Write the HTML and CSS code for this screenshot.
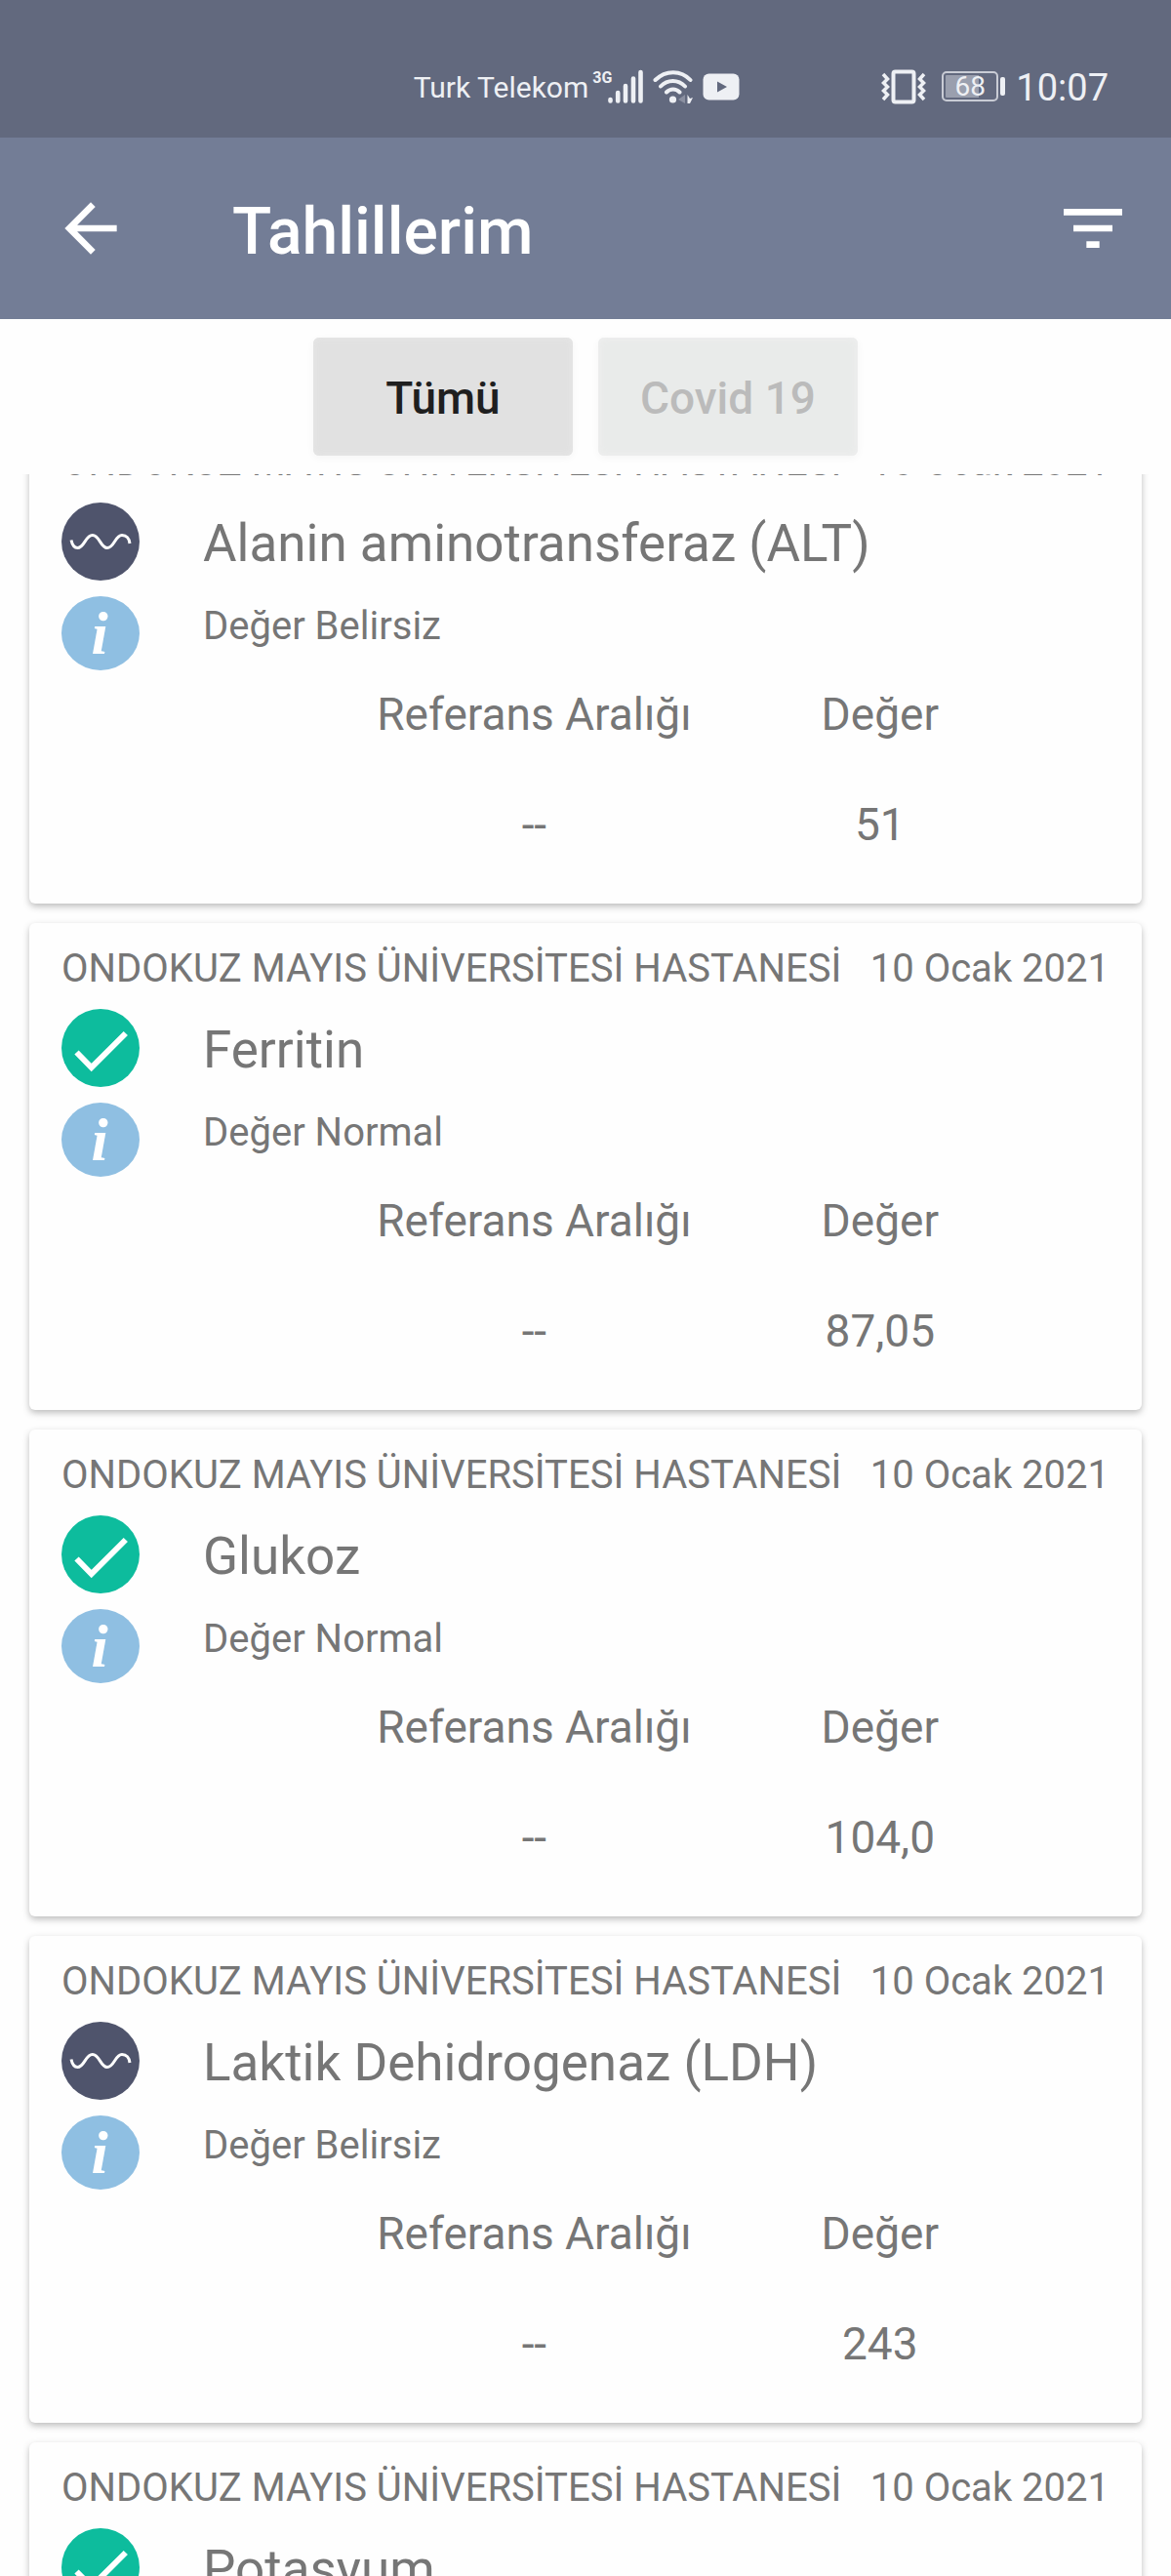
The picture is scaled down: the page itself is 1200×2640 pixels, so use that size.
FILE: index.html
```html
<!DOCTYPE html>
<html lang="tr">
<head>
    <meta charset="UTF-8">
    <meta name="viewport" content="width=device-width, initial-scale=1.0">
    <title>Tahlillerim</title>
    <link rel="stylesheet" href="styles.css">
</head>
<body>

    <div class="status-bar">
        <div class="status-group">
            <span class="carrier">Turk Telekom</span>
            <span class="network">3G</span>
            <svg class="signal" width="36" height="36" viewBox="0 0 36 36" fill="none" stroke="#eef0f4" stroke-width="4.600" stroke-linecap="round">
                <path d="M2.500 31V32.500M10.200 24V32.500M18 17V32.500M26 9.500V32.500M33.500 3V32.500"/>
            </svg>
            <svg class="wifi" width="42" height="36" viewBox="0 0 42 36" fill="none" stroke="#eef0f4" stroke-width="4" stroke-linecap="round">
                <path d="M2.500 11C13 0.500 29 0.500 38.500 11M8 17.500C15 10 26 10 33 17.500M14 23.500C18 19.500 23.500 19.500 27.500 23.500"/>
                <circle cx="20.500" cy="31" r="3.600" fill="#eef0f4" stroke="none"/>
                <path d="M33 26V35L26 31Z" fill="#8b90a1" stroke="none"/>
                <path d="M35.500 26L38 30L41 29L38 35H35.500Z" fill="#eef0f4" stroke="none"/>
            </svg>
            <svg width="38" height="28" viewBox="0 0 38 28">
                <rect x="0.500" y="0.500" width="37" height="27" rx="6" fill="#eef0f4"/>
                <path d="M15 8.500V19.500L25 14Z" fill="#62697e"/>
            </svg>
        </div>
        <div class="status-group status-right">
            <svg width="46" height="36" viewBox="0 0 46 36" fill="none" stroke="#eef0f4">
                <rect x="12.500" y="2.500" width="21" height="31" rx="2" stroke-width="4"/>
                <path d="M2 5L6.500 10L2.500 14L6.500 18L2.500 22L6.500 26L2 31M44 5L39.500 10L43.500 14L39.500 18L43.500 22L39.500 26L44 31" stroke-width="3.500"/>
            </svg>
            <div class="battery">
                <span class="battery-level">68</span>
            </div>
            <span class="clock">10:07</span>
        </div>
    </div>

    <header class="app-bar">
        <button class="icon-button" aria-label="Geri">
            <svg width="80" height="80" viewBox="0 0 24 24" fill="#fff"><path d="M20 11H7.830l5.590-5.590L12 4l-8 8 8 8 1.410-1.410L7.830 13H20v-2z"/></svg>
        </button>
        <h1 class="title">Tahlillerim</h1>
        <button class="icon-button" aria-label="Filtrele">
            <svg width="80" height="80" viewBox="0 0 24 24" fill="#fff"><path d="M10 18h4v-2h-4v2zM3 6v2h18V6H3zm3 7h12v-2H6v2z"/></svg>
        </button>
    </header>

    <div class="filters">
        <button class="filter filter-active">Tümü</button>
        <button class="filter" disabled>Covid 19</button>
    </div>

    <main class="results">
        <div class="results-list">

            <article class="card">
                <div class="card-header">
                    <span>ONDOKUZ MAYIS ÜNİVERSİTESİ HASTANESİ</span>
                    <span>10 Ocak 2021</span>
                </div>
                <div class="card-body">
                    <div class="card-icons">
                        <svg width="80" height="80"><use href="#icon-wave"/></svg>
                        <button class="icon-button" aria-label="Bilgi"><svg width="80" height="76"><use href="#icon-info"/></svg></button>
                    </div>
                    <div class="card-text">
                        <h2 class="test-name">Alanin aminotransferaz (ALT)</h2>
                        <p class="test-status">Değer Belirsiz</p>
                    </div>
                </div>
                <table class="values">
                    <tr><th>Referans Aralığı</th><th>Değer</th></tr>
                    <tr><td>--</td><td>51</td></tr>
                </table>
            </article>

            <article class="card">
                <div class="card-header">
                    <span>ONDOKUZ MAYIS ÜNİVERSİTESİ HASTANESİ</span>
                    <span>10 Ocak 2021</span>
                </div>
                <div class="card-body">
                    <div class="card-icons">
                        <svg width="80" height="80"><use href="#icon-check"/></svg>
                        <button class="icon-button" aria-label="Bilgi"><svg width="80" height="76"><use href="#icon-info"/></svg></button>
                    </div>
                    <div class="card-text">
                        <h2 class="test-name">Ferritin</h2>
                        <p class="test-status">Değer Normal</p>
                    </div>
                </div>
                <table class="values">
                    <tr><th>Referans Aralığı</th><th>Değer</th></tr>
                    <tr><td>--</td><td>87,05</td></tr>
                </table>
            </article>

            <article class="card">
                <div class="card-header">
                    <span>ONDOKUZ MAYIS ÜNİVERSİTESİ HASTANESİ</span>
                    <span>10 Ocak 2021</span>
                </div>
                <div class="card-body">
                    <div class="card-icons">
                        <svg width="80" height="80"><use href="#icon-check"/></svg>
                        <button class="icon-button" aria-label="Bilgi"><svg width="80" height="76"><use href="#icon-info"/></svg></button>
                    </div>
                    <div class="card-text">
                        <h2 class="test-name">Glukoz</h2>
                        <p class="test-status">Değer Normal</p>
                    </div>
                </div>
                <table class="values">
                    <tr><th>Referans Aralığı</th><th>Değer</th></tr>
                    <tr><td>--</td><td>104,0</td></tr>
                </table>
            </article>

            <article class="card">
                <div class="card-header">
                    <span>ONDOKUZ MAYIS ÜNİVERSİTESİ HASTANESİ</span>
                    <span>10 Ocak 2021</span>
                </div>
                <div class="card-body">
                    <div class="card-icons">
                        <svg width="80" height="80"><use href="#icon-wave"/></svg>
                        <button class="icon-button" aria-label="Bilgi"><svg width="80" height="76"><use href="#icon-info"/></svg></button>
                    </div>
                    <div class="card-text">
                        <h2 class="test-name">Laktik Dehidrogenaz (LDH)</h2>
                        <p class="test-status">Değer Belirsiz</p>
                    </div>
                </div>
                <table class="values">
                    <tr><th>Referans Aralığı</th><th>Değer</th></tr>
                    <tr><td>--</td><td>243</td></tr>
                </table>
            </article>

            <article class="card">
                <div class="card-header">
                    <span>ONDOKUZ MAYIS ÜNİVERSİTESİ HASTANESİ</span>
                    <span>10 Ocak 2021</span>
                </div>
                <div class="card-body">
                    <div class="card-icons">
                        <svg width="80" height="80"><use href="#icon-check"/></svg>
                    </div>
                    <div class="card-text">
                        <h2 class="test-name">Potasyum</h2>
                    </div>
                </div>
            </article>

        </div>
    </main>

    <!-- Shared icons -->
    <svg class="sprite" aria-hidden="true">
        <symbol id="icon-check" viewBox="0 0 80 80">
            <circle cx="40" cy="40" r="40" fill="#0dbc9d"/>
            <path d="M15.500 44.500L30.700 60L65.800 25" fill="none" stroke="#fff" stroke-width="6"/>
        </symbol>
        <symbol id="icon-wave" viewBox="0 0 80 80">
            <circle cx="40" cy="40" r="40" fill="#4f546c"/>
            <path d="M10 38.500C11 43.500 13.500 46.500 16.500 46.500C23.500 46.500 24.500 33.500 31.800 33.500C39 33.500 40 46.500 46.800 46.500C54 46.500 55 33.500 62 33.500C66.500 33.500 69.500 37 70 42" fill="none" stroke="#fff" stroke-width="3"/>
        </symbol>
        <symbol id="icon-info" viewBox="0 0 80 76">
            <ellipse cx="40" cy="38" rx="40" ry="38" fill="#8fbfe2"/>
            <text x="39" y="59" class="info-letter" text-anchor="middle">i</text>
        </symbol>
    </svg>

</body>
</html>
```
FILE: styles.css
```css
/* Base */
* {
    box-sizing: border-box;
}

body {
    margin: 0;
    height: 100vh;
    display: flex;
    flex-direction: column;
    overflow: hidden;
    background-color: #fefefe;
    color: #767676;
    font-family: Roboto, "Liberation Sans", sans-serif;
}

svg {
    display: block;
    flex-shrink: 0;
}

.sprite {
    display: none;
}

.info-letter {
    font: italic bold 62px "Liberation Serif", serif;
    fill: #fff;
}

.icon-button {
    padding: 0;
    border: none;
    background: none;
    cursor: pointer;
}

/* Status bar */
.status-bar {
    flex-shrink: 0;
    display: flex;
    justify-content: flex-end;
    height: 141px;
    padding: 36px 64px 0 0;
    background-color: #62697e;
    color: #eef0f4;
}

.status-group {
    display: flex;
    align-items: center;
}

.carrier {
    padding-top: 2px;
    font-size: 30px;
}

.network {
    margin: 0 -4px 18px 4px;
    font-size: 16px;
    font-weight: bold;
}

.wifi {
    margin: 0 9px 0 10px;
}

.status-right {
    margin-left: 145px;
}

.battery {
    position: relative;
    display: flex;
    align-items: center;
    justify-content: center;
    width: 58px;
    height: 31px;
    margin: 0 18px 0 16px;
    padding: 2px;
    border: 2px solid #c9ccd5;
    border-radius: 5px;
    background: linear-gradient(to right, #9a9fae 68%, transparent 68%) content-box;
}

/* battery tip */
.battery::after {
    content: "";
    position: absolute;
    top: 4px;
    right: -9px;
    width: 5px;
    height: 19px;
    border-radius: 2px;
    background-color: #eef0f4;
}

.battery-level {
    font-size: 28px;
    line-height: 28px;
}

.clock {
    padding-top: 2px;
    font-size: 38px;
}

/* App bar */
.app-bar {
    flex-shrink: 0;
    display: flex;
    align-items: center;
    height: 186px;
    padding: 0 40px 0 53px;
    background-color: #737d96;
}

.title {
    flex: 1;
    margin: 0;
    padding: 6px 0 0 105px;
    color: #fff;
    font-size: 66px;
    font-weight: 500;
}

/* Filters */
.filters {
    flex-shrink: 0;
    display: flex;
    justify-content: center;
    gap: 26px;
    padding: 19px 0;
}

.filter {
    width: 266px;
    height: 121px;
    padding-top: 4px;
    border: none;
    border-radius: 6px;
    background-color: #e9ebea;
    box-shadow: inset 0 0 6px 2px #eeeeee, 0 2px 8px rgba(0, 0, 0, 0.04);
    color: #bbb;
    font-family: inherit;
    font-size: 46px;
    font-weight: 500;
}

.filter-active {
    background-color: #e1e1e1;
    box-shadow: inset 0 0 6px 2px #e5e5e5, 0 2px 8px rgba(0, 0, 0, 0.04);
    color: #1f1f1f;
}

/* Results */
.results {
    flex: 1;
    min-height: 0;
    overflow: hidden;
}

/* list is scrolled part of the way through the first card */
.results-list {
    display: flex;
    flex-direction: column;
    gap: 20px;
    margin-top: -59px;
    padding: 0 30px;
}

.card {
    padding: 23px 33px 54px;
    border-radius: 6px;
    background-color: #fefefe;
    box-shadow: 0 3px 7px rgba(0, 0, 0, 0.26);
}

.card-header {
    display: flex;
    justify-content: space-between;
    font-size: 40px;
    line-height: 48px;
    white-space: nowrap;
}

.card-body {
    display: flex;
    gap: 65px;
    margin-top: 17px;
}

.card-icons {
    display: flex;
    flex-direction: column;
    gap: 16px;
}

.card-text {
    padding-top: 10px;
}

.test-name {
    margin: 0;
    font-size: 53px;
    font-weight: normal;
    line-height: 64px;
}

.test-status {
    margin: 29px 0 0;
    font-size: 40px;
    line-height: 48px;
}

.values {
    width: 66%;
    margin: 18px 58px 0 auto;
    border-collapse: collapse;
    table-layout: fixed;
    font-size: 46px;
    line-height: 54px;
    text-align: center;
}

.values th {
    padding: 0;
    font-weight: normal;
}

.values td {
    padding: 59px 0 0;
}
```
